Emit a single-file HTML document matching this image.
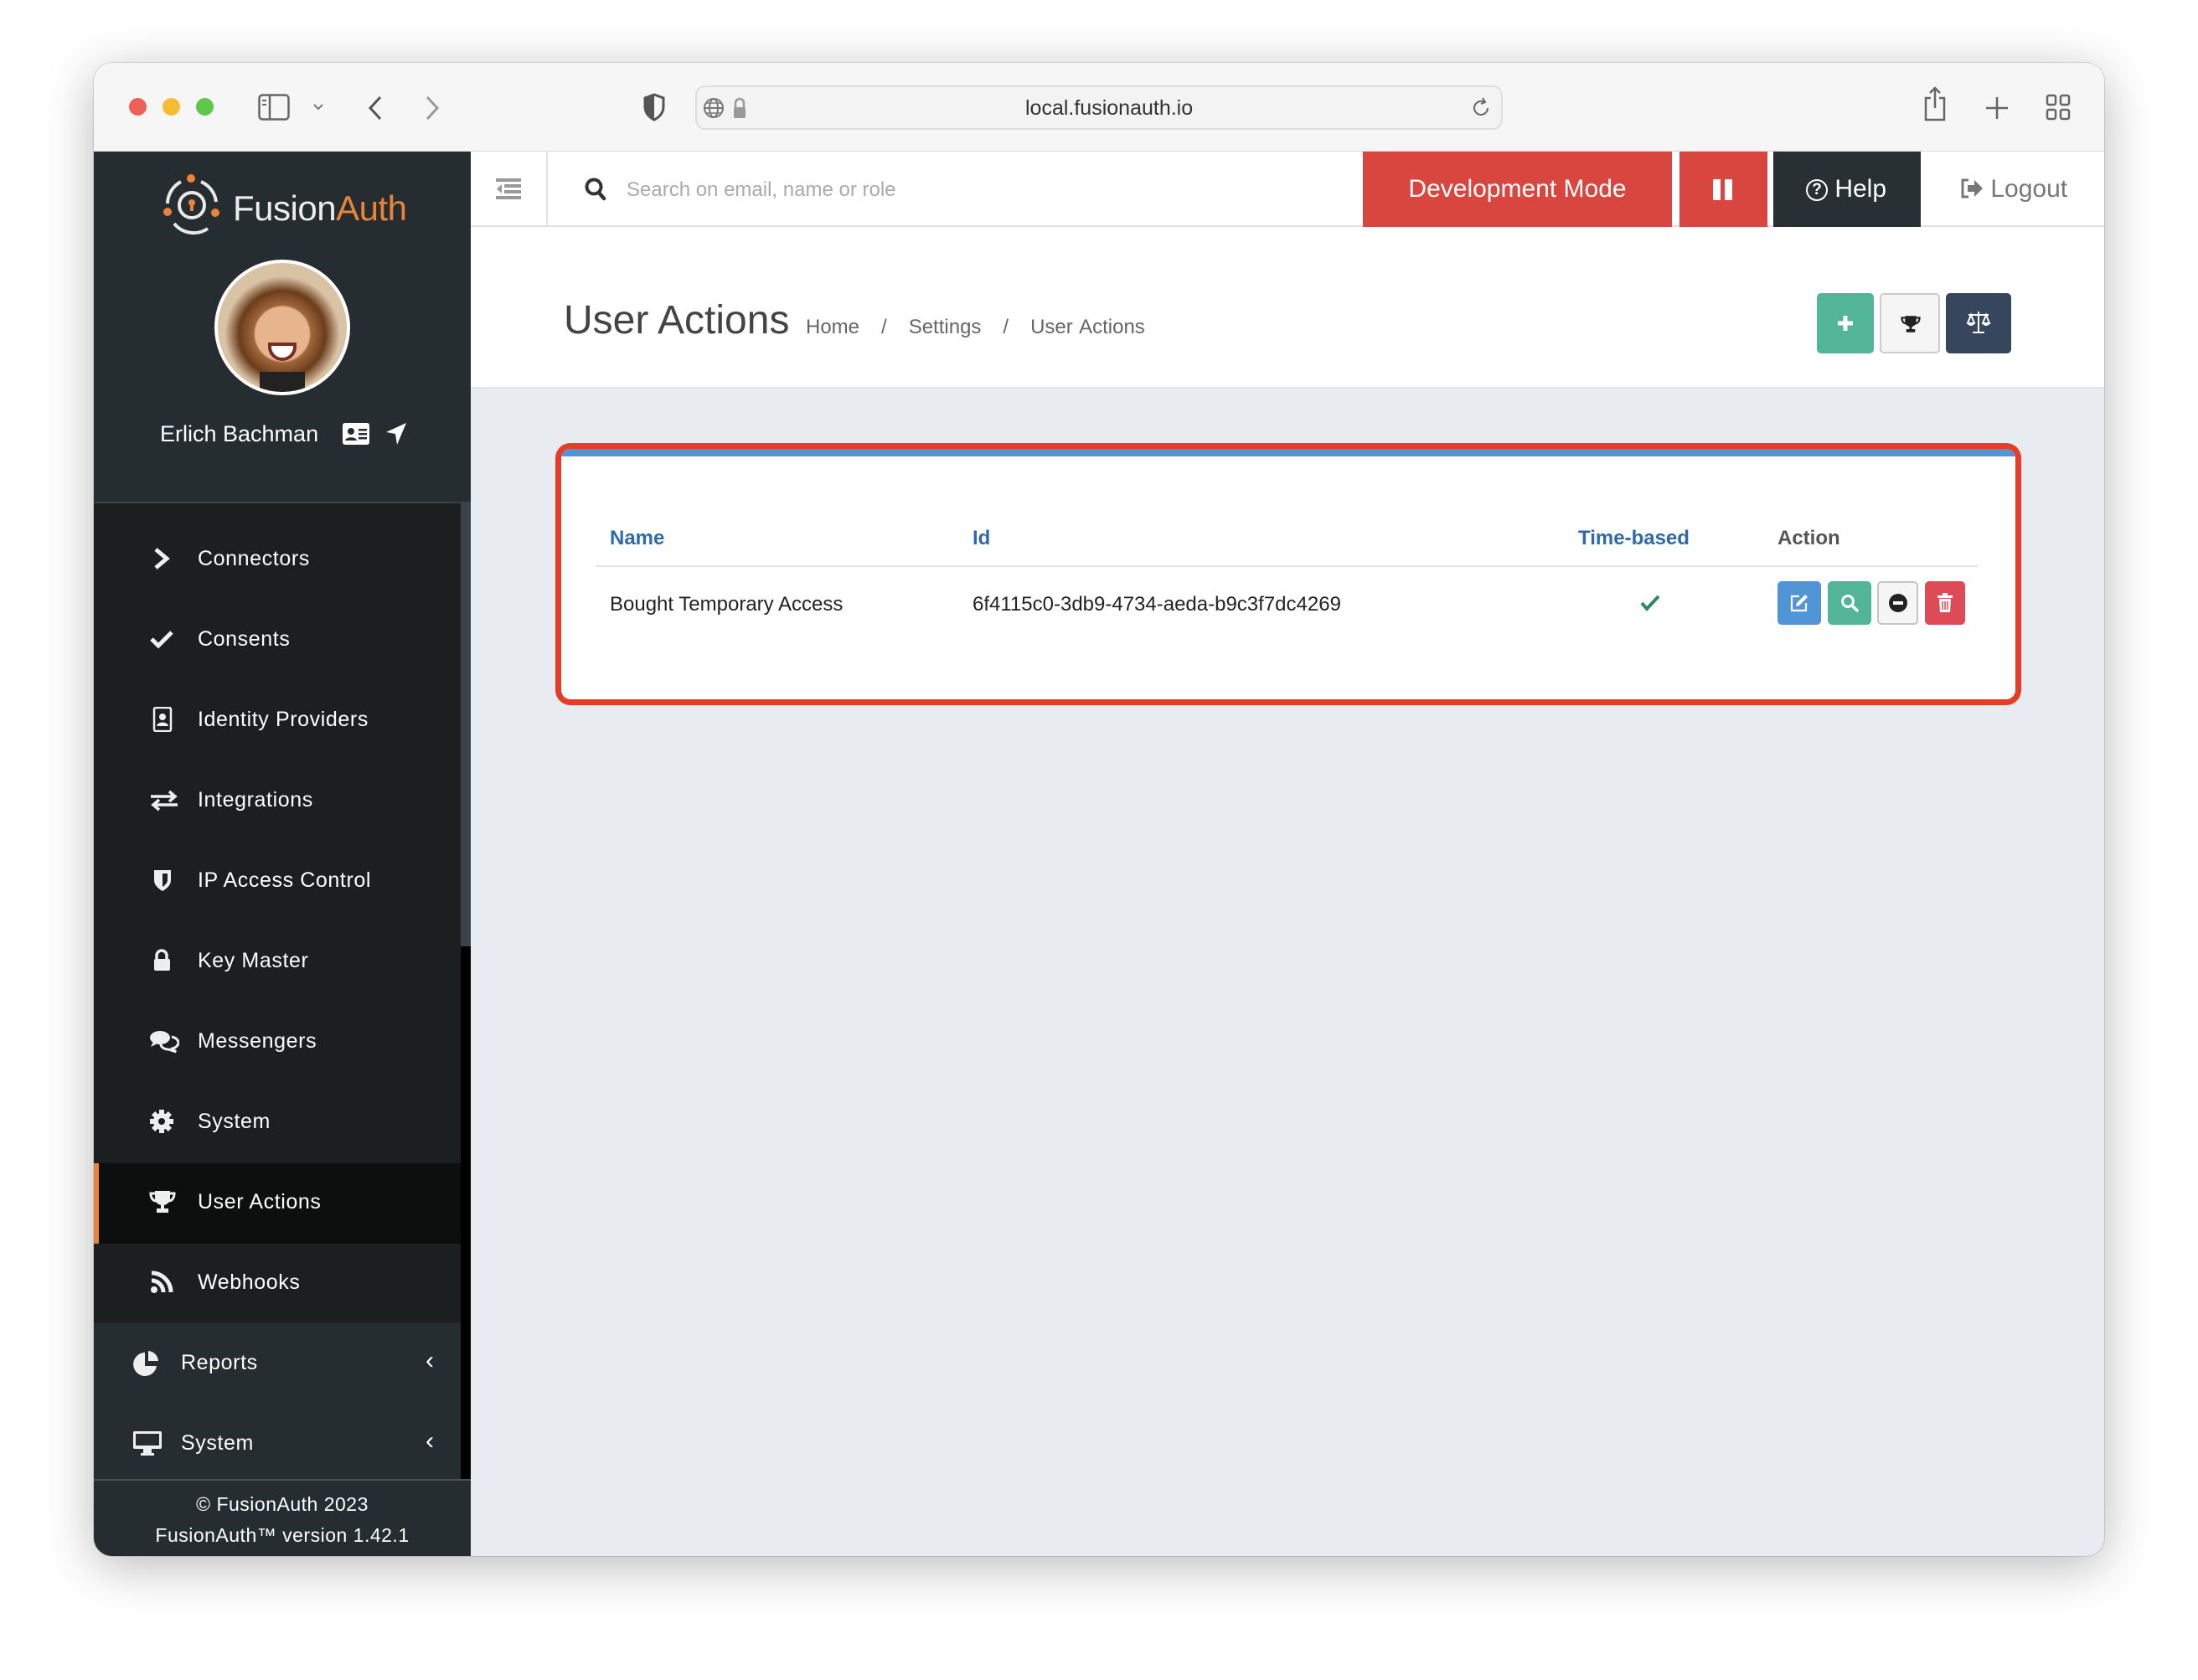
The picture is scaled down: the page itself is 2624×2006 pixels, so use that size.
<!DOCTYPE html>
<html><head><meta charset="utf-8"><style>
*{box-sizing:border-box;margin:0;padding:0}
body{width:2624px;height:2006px;background:#fff;font-family:"Liberation Sans",Arial,sans-serif;position:relative;overflow:hidden}
.abs{position:absolute}
.win{left:112px;top:75px;width:2400px;height:1783px;border-radius:22px;overflow:hidden;box-shadow:0 12px 60px rgba(0,0,0,.28),0 0 0 1px rgba(0,0,0,.12);background:#e8ecf0}
.tb{left:0;top:0;width:2400px;height:106px;background:#f6f6f6;border-bottom:1px solid #dcdcdc}
.dot{width:21px;height:21px;border-radius:50%;top:42px}
.side{left:0;top:106px;width:450px;height:1677px;background:#262d30}
.item{position:absolute;left:0;width:438px;height:96px;color:#fff;font-size:25px;letter-spacing:.6px}
.item span{position:absolute;left:124px;top:33px}
.item svg{position:absolute;left:66px;top:32px}
.nav{left:450px;top:106px;width:1950px;height:90px;background:#fff;border-bottom:2px solid #e2e2e2}
.hdr{left:450px;top:196px;width:1950px;height:193px;background:#fff;border-bottom:2px solid #e0e4e8}
.btn{position:absolute;border-radius:5px}
</style></head><body>
<div class="abs win">
  <div class="abs tb">
    <div class="abs dot" style="left:42px;background:#ed5f57"></div>
    <div class="abs dot" style="left:82px;background:#f5bd33"></div>
    <div class="abs dot" style="left:122px;background:#5fc74a"></div>
    <svg class="abs" style="left:196px;top:37px" width="38" height="32" viewBox="0 0 38 32"><rect x="1.5" y="1.5" width="35" height="29" rx="4" fill="none" stroke="#666" stroke-width="2.5"/><line x1="14" y1="2" x2="14" y2="30" stroke="#666" stroke-width="2.5"/><line x1="5" y1="8" x2="10" y2="8" stroke="#666" stroke-width="2"/><line x1="5" y1="13" x2="10" y2="13" stroke="#666" stroke-width="2"/></svg>
    <svg class="abs" style="left:261px;top:48px" width="14" height="10" viewBox="0 0 14 10"><path d="M2 2l5 5 5-5" fill="none" stroke="#777" stroke-width="2"/></svg>
    <svg class="abs" style="left:326px;top:38px" width="20" height="32" viewBox="0 0 20 32"><path d="M16 3L4 16l12 13" fill="none" stroke="#555" stroke-width="3"/></svg>
    <svg class="abs" style="left:394px;top:38px" width="20" height="32" viewBox="0 0 20 32"><path d="M4 3l12 13L4 29" fill="none" stroke="#999" stroke-width="3"/></svg>
    <svg class="abs" style="left:655px;top:36px" width="28" height="34" viewBox="0 0 28 34"><path d="M14 2L3 6v10c0 8 5 13 11 16 6-3 11-8 11-16V6z" fill="none" stroke="#555" stroke-width="3"/><path d="M14 2v30c-6-3-11-8-11-16V6z" fill="#555"/></svg>
    <div class="abs" style="left:718px;top:27px;width:964px;height:53px;border:2px solid #dedede;border-radius:12px;background:#f3f3f3"></div>
    <svg class="abs" style="left:726px;top:40px" width="28" height="28" viewBox="0 0 28 28"><circle cx="14" cy="14" r="11" fill="none" stroke="#777" stroke-width="2"/><ellipse cx="14" cy="14" rx="5" ry="11" fill="none" stroke="#777" stroke-width="2"/><line x1="3" y1="14" x2="25" y2="14" stroke="#777" stroke-width="2"/><line x1="5" y1="8" x2="23" y2="8" stroke="#777" stroke-width="1.5"/><line x1="5" y1="20" x2="23" y2="20" stroke="#777" stroke-width="1.5"/></svg>
    <svg class="abs" style="left:762px;top:40px" width="18" height="28" viewBox="0 0 18 28"><path d="M4 13V8a5 5 0 0 1 10 0v5" fill="none" stroke="#999" stroke-width="2.5"/><rect x="2" y="13" width="14" height="13" rx="2" fill="#999"/></svg>
    <div class="abs" style="left:1112px;top:40px;font-size:25px;color:#333">local.fusionauth.io</div>
    <svg class="abs" style="left:1643px;top:39px" width="26" height="28" viewBox="0 0 26 28"><path d="M21 15a8 8 0 1 1-4-7" fill="none" stroke="#666" stroke-width="2"/><path d="M15 3l3 5-5 2" fill="none" stroke="#666" stroke-width="2"/></svg>
    <svg class="abs" style="left:2183px;top:28px" width="30" height="42" viewBox="0 0 30 42"><path d="M10 14H4v26h22V14h-6" fill="none" stroke="#666" stroke-width="2.5"/><path d="M15 2v24M9 8l6-6 6 6" fill="none" stroke="#666" stroke-width="2.5"/></svg>
    <svg class="abs" style="left:2258px;top:40px" width="28" height="28" viewBox="0 0 28 28"><path d="M14 1v26M1 14h26" stroke="#666" stroke-width="2.5"/></svg>
    <svg class="abs" style="left:2330px;top:37px" width="30" height="32" viewBox="0 0 30 32"><rect x="2" y="2" width="10" height="11" rx="2" fill="none" stroke="#666" stroke-width="2.5"/><rect x="18" y="2" width="10" height="11" rx="2" fill="none" stroke="#666" stroke-width="2.5"/><rect x="2" y="19" width="10" height="11" rx="2" fill="none" stroke="#666" stroke-width="2.5"/><rect x="18" y="19" width="10" height="11" rx="2" fill="none" stroke="#666" stroke-width="2.5"/></svg>
  </div>

  <div class="abs side">
    <svg class="abs" style="left:82px;top:26px" width="70" height="78" viewBox="0 0 70 78">
      <path d="M22 10A30 30 0 0 0 6 36" fill="none" stroke="#e8e8e8" stroke-width="4"/>
      <path d="M46 10A30 30 0 0 1 64 34" fill="none" stroke="#e8e8e8" stroke-width="4"/>
      <path d="M14 60A30 30 0 0 0 54 66" fill="none" stroke="#e8e8e8" stroke-width="4"/>
      <circle cx="35" cy="38" r="15" fill="none" stroke="#e8e8e8" stroke-width="4"/>
      <circle cx="35" cy="35" r="4" fill="#e8843a"/><rect x="33" y="36" width="4" height="9" fill="#e8843a"/>
      <circle cx="34" cy="6" r="5" fill="#e8843a"/><circle cx="6" cy="46" r="5" fill="#e8843a"/><circle cx="63" cy="47" r="5" fill="#e8843a"/>
    </svg>
    <div class="abs" style="left:166px;top:44px;font-size:42px;color:#ececec;letter-spacing:-.5px">Fusion<span style="color:#e8843a">Auth</span></div>
    <div class="abs" style="left:144px;top:129px;width:162px;height:162px;border-radius:50%;background:#fff;padding:4px">
      <div style="width:154px;height:154px;border-radius:50%;background:radial-gradient(circle at 50% 55%,#e6b58e 0 28%,#a0673a 30%,#6b3d1c 45%,#d9c3a5 60%);position:relative;overflow:hidden">
        <div style="position:absolute;left:60px;top:95px;width:34px;height:22px;border-radius:0 0 17px 17px;background:#fff;border:4px solid #7a2b22"></div>
        <div style="position:absolute;left:50px;top:130px;width:54px;height:30px;background:#222"></div>
      </div>
    </div>
    <div class="abs" style="left:79px;top:322px;font-size:27px;color:#fff">Erlich Bachman</div>
    <svg class="abs" style="left:297px;top:324px" width="32" height="26" viewBox="0 0 32 26"><rect x="0" y="0" width="32" height="26" rx="3" fill="#fff"/><circle cx="10" cy="10" r="4" fill="#262d30"/><path d="M3 21c1-5 13-5 14 0z" fill="#262d30"/><rect x="19" y="7" width="10" height="2.5" fill="#262d30"/><rect x="19" y="12" width="10" height="2.5" fill="#262d30"/><rect x="19" y="17" width="10" height="2.5" fill="#262d30"/></svg>
    <svg class="abs" style="left:348px;top:323px" width="26" height="28" viewBox="0 0 26 28"><path d="M25 1L1 12l11 2 2 13z" fill="#fff"/></svg>
    <div class="abs" style="left:0;top:418px;width:450px;height:2px;background:#3a4447"></div>

    <div class="abs" style="left:0;top:420px;width:438px;height:979px;background:#1b1f20"></div>
    <div class="abs" style="left:0;top:1208px;width:438px;height:96px;background:#0d0f0f"></div>
    <div class="abs" style="left:0;top:1208px;width:6px;height:96px;background:#e8843a"></div>
    <div class="item" style="top:439px"><svg width="30" height="30" viewBox="0 0 30 30"><path d="M8 4l13 11L8 26" fill="none" stroke="#eee" stroke-width="5"/></svg><span>Connectors</span></div>
    <div class="item" style="top:535px"><svg width="30" height="30" viewBox="0 0 30 30"><path d="M3 15l8 8L27 7" fill="none" stroke="#eee" stroke-width="5"/></svg><span>Consents</span></div>
    <div class="item" style="top:631px"><svg width="30" height="30" viewBox="0 0 30 30"><rect x="6" y="1" width="20" height="28" rx="2" fill="none" stroke="#eee" stroke-width="2.5"/><circle cx="16" cy="12" r="4" fill="#eee"/><path d="M9 23c1-6 13-6 14 0z" fill="#eee"/></svg><span>Identity Providers</span></div>
    <div class="item" style="top:727px"><svg width="36" height="30" viewBox="0 0 36 30"><path d="M2 11h28M24 5l7 6-7 6" fill="none" stroke="#eee" stroke-width="3.5"/><path d="M34 21H6M12 15l-7 6 7 6" fill="none" stroke="#eee" stroke-width="3.5"/></svg><span>Integrations</span></div>
    <div class="item" style="top:823px"><svg width="30" height="30" viewBox="0 0 30 30"><path d="M6 3h20v12c0 6-5 10-10 13C11 25 6 21 6 15z" fill="#eee"/><path d="M16 7h6v8c0 3-3 6-6 8z" fill="#1b1f20"/></svg><span>IP Access Control</span></div>
    <div class="item" style="top:919px"><svg width="30" height="30" viewBox="0 0 30 30"><path d="M9 13V9a6 6 0 0 1 12 0v4" fill="none" stroke="#eee" stroke-width="3.5"/><rect x="6" y="13" width="19" height="14" rx="2" fill="#eee"/></svg><span>Key Master</span></div>
    <div class="item" style="top:1015px"><svg width="36" height="30" viewBox="0 0 36 30"><ellipse cx="13" cy="11" rx="12" ry="8" fill="#eee"/><path d="M5 16l-3 6 8-4z" fill="#eee"/><path d="M27 10c5 1 8 4 8 7s-3 6-7 7l4 4-9-3c-5 0-9-3-9-6" fill="none" stroke="#eee" stroke-width="3"/></svg><span>Messengers</span></div>
    <div class="item" style="top:1111px"><svg width="30" height="30" viewBox="0 0 30 30"><g fill="#eee"><circle cx="15" cy="15" r="10"/><rect x="12" y="1" width="6" height="28"/><rect x="1" y="12" width="28" height="6"/><rect x="12" y="1" width="6" height="28" transform="rotate(45 15 15)"/><rect x="12" y="1" width="6" height="28" transform="rotate(-45 15 15)"/></g><circle cx="15" cy="15" r="4" fill="#1b1f20"/></svg><span>System</span></div>
    <div class="item" style="top:1207px"><svg width="32" height="30" viewBox="0 0 32 30"><path d="M7 2h18v8c0 6-4 9-9 9S7 16 7 10z" fill="#eee"/><path d="M7 5H2c0 6 3 9 7 9M25 5h5c0 6-3 9-7 9" fill="none" stroke="#eee" stroke-width="3"/><rect x="14" y="18" width="4" height="6" fill="#eee"/><rect x="9" y="23" width="14" height="5" fill="#eee"/></svg><span>User Actions</span></div>
    <div class="item" style="top:1303px"><svg width="30" height="30" viewBox="0 0 30 30"><circle cx="6" cy="24" r="4" fill="#eee"/><path d="M3 13a14 14 0 0 1 14 14M3 4a23 23 0 0 1 23 23" fill="none" stroke="#eee" stroke-width="5"/></svg><span>Webhooks</span></div>
    <div class="item" style="top:1399px"><svg style="left:46px" width="34" height="32" viewBox="0 0 34 32"><path d="M15 3a14 14 0 1 0 14 16H15z" fill="#eee"/><path d="M19 1a13 13 0 0 1 12 12H19z" fill="#eee"/></svg><span style="left:104px">Reports</span><span style="left:396px;top:28px;font-size:30px">‹</span></div>
    <div class="item" style="top:1495px"><svg style="left:46px" width="36" height="32" viewBox="0 0 36 32"><rect x="1" y="1" width="34" height="21" rx="2" fill="#eee"/><rect x="4" y="4" width="28" height="14" fill="#262d30"/><rect x="13" y="22" width="10" height="6" fill="#eee"/><rect x="10" y="27" width="16" height="3" fill="#eee"/></svg><span style="left:104px">System</span><span style="left:396px;top:28px;font-size:30px">‹</span></div>
    <div class="abs" style="left:438px;top:420px;width:12px;height:1165px;background:#000"></div>
    <div class="abs" style="left:438px;top:420px;width:12px;height:529px;background:#3a4446"></div>
    <div class="abs" style="left:0;top:1585px;width:450px;height:2px;background:#4a5457"></div>
    <div class="abs" style="left:0;top:1597px;width:450px;text-align:center;font-size:23px;color:#fff;line-height:37px;letter-spacing:.5px">© FusionAuth 2023<br>FusionAuth™ version 1.42.1</div>
  </div>

  <div class="abs nav">
    <svg class="abs" style="left:30px;top:32px" width="30" height="26" viewBox="0 0 30 26"><g fill="#999"><rect x="0" y="0" width="30" height="4"/><rect x="10" y="7" width="20" height="4"/><rect x="10" y="14" width="20" height="4"/><rect x="0" y="21" width="30" height="4"/><path d="M7 7v11l-6-5.5z"/></g></svg>
    <div class="abs" style="left:90px;top:0;width:2px;height:90px;background:#e3e3e3"></div>
    <svg class="abs" style="left:135px;top:30px" width="28" height="30" viewBox="0 0 28 30"><circle cx="12" cy="12" r="8.5" fill="none" stroke="#333" stroke-width="4"/><path d="M18 19l6 7" stroke="#333" stroke-width="4.5" stroke-linecap="round"/></svg>
    <div class="abs" style="left:186px;top:32px;font-size:24px;color:#aaa">Search on email, name or role</div>
    <div class="abs" style="left:1065px;top:0;width:369px;height:90px;background:#d9463f;color:#fff;font-size:30px;text-align:center;line-height:90px">Development Mode</div>
    <div class="abs" style="left:1443px;top:0;width:105px;height:90px;background:#d9463f"><div class="abs" style="left:40px;top:33px;width:9px;height:25px;background:#fff"></div><div class="abs" style="left:54px;top:33px;width:9px;height:25px;background:#fff"></div></div>
    <div class="abs" style="left:1555px;top:0;width:176px;height:90px;background:#283033;color:#fff;font-size:30px;line-height:90px;padding-left:39px"><span style="display:inline-block;width:26px;height:26px;border:2.5px solid #fff;border-radius:50%;font-size:19px;line-height:21px;text-align:center;vertical-align:3px;font-weight:bold">?</span> Help</div>
    <div class="abs" style="left:1778px;top:0;height:90px;line-height:90px;font-size:30px;color:#777"><svg width="28" height="26" viewBox="0 0 28 26" style="vertical-align:-3px"><path d="M10 3H3v20h7" fill="none" stroke="#777" stroke-width="3"/><path d="M9 9h8V3l10 10-10 10v-6H9z" fill="#777"/></svg> Logout</div>
  </div>

  <div class="abs hdr">
    <div class="abs" style="left:111px;top:84px;font-size:48px;color:#444">User Actions</div>
    <div class="abs" style="left:400px;top:106px;font-size:24px;color:#666;word-spacing:2px">Home &nbsp;&nbsp;/&nbsp;&nbsp; Settings &nbsp;&nbsp;/&nbsp;&nbsp; User Actions</div>
    <div class="btn" style="left:1607px;top:79px;width:68px;height:72px;background:#52b596"><svg class="abs" style="left:24px;top:26px" width="20" height="20" viewBox="0 0 20 20"><path d="M10 1v18M1 10h18" stroke="#fff" stroke-width="5"/></svg></div>
    <div class="btn" style="left:1682px;top:79px;width:72px;height:72px;background:#f5f5f5;border:2px solid #ccc"><svg class="abs" style="left:23px;top:23px" width="24" height="24" viewBox="0 0 32 30"><path d="M7 2h18v8c0 6-4 9-9 9S7 16 7 10z" fill="#222"/><path d="M7 5H2c0 6 3 9 7 9M25 5h5c0 6-3 9-7 9" fill="none" stroke="#222" stroke-width="3"/><rect x="14" y="18" width="4" height="6" fill="#222"/><rect x="9" y="23" width="14" height="5" fill="#222"/></svg></div>
    <div class="btn" style="left:1761px;top:79px;width:78px;height:72px;background:#36465c"><svg class="abs" style="left:24px;top:20px" width="30" height="30" viewBox="0 0 30 30"><path d="M15 2v24M8 27h14M3 6h24M6 6l-4 10h8zM24 6l-4 10h8z" fill="none" stroke="#fff" stroke-width="2"/><path d="M2 16a4 3 0 0 0 8 0zM20 16a4 3 0 0 0 8 0z" fill="#fff"/></svg></div>
  </div>

  <div class="abs" style="left:551px;top:454px;width:1750px;height:313px;border:7px solid #e53d27;border-radius:18px;background:#fff;overflow:hidden">
    <div class="abs" style="left:0;top:0;width:1736px;height:9px;background:#5294d6"></div>
    <div class="abs" style="left:58px;top:93px;font-size:24px;font-weight:bold;color:#2c6aac">Name</div>
    <div class="abs" style="left:491px;top:93px;font-size:24px;font-weight:bold;color:#2c6aac">Id</div>
    <div class="abs" style="left:1214px;top:93px;font-size:24px;font-weight:bold;color:#2c6aac">Time-based</div>
    <div class="abs" style="left:1452px;top:93px;font-size:24px;font-weight:bold;color:#555">Action</div>
    <div class="abs" style="left:41px;top:139px;width:1650px;height:2px;background:#e4e4e4"></div>
    <div class="abs" style="left:58px;top:172px;font-size:24px;color:#222">Bought Temporary Access</div>
    <div class="abs" style="left:491px;top:172px;font-size:24px;color:#222">6f4115c0-3db9-4734-aeda-b9c3f7dc4269</div>
    <svg class="abs" style="left:1288px;top:173px" width="24" height="22" viewBox="0 0 24 22"><path d="M2 11l6 7L22 3" fill="none" stroke="#2e8a5e" stroke-width="4"/></svg>
    <div class="btn" style="left:1452px;top:158px;width:52px;height:52px;background:#5195d7"><svg class="abs" style="left:14px;top:14px" width="24" height="24" viewBox="0 0 24 24"><path d="M12 4H3v17h17v-9" fill="none" stroke="#fff" stroke-width="2.2"/><path d="M19 2l3 3-10 10-4 1 1-4z" fill="#fff"/></svg></div>
    <div class="btn" style="left:1512px;top:158px;width:52px;height:52px;background:#52b596"><svg class="abs" style="left:14px;top:14px" width="24" height="24" viewBox="0 0 24 24"><circle cx="10" cy="10" r="6.5" fill="none" stroke="#fff" stroke-width="3"/><path d="M15 15l6 6" stroke="#fff" stroke-width="3.5" stroke-linecap="round"/></svg></div>
    <div class="btn" style="left:1571px;top:158px;width:49px;height:52px;background:#f5f5f5;border:2px solid #c4c4c4"><svg class="abs" style="left:11px;top:12px" width="24" height="24" viewBox="0 0 24 24"><circle cx="12" cy="12" r="11" fill="#222"/><rect x="6" y="10" width="12" height="4" fill="#fff"/></svg></div>
    <div class="btn" style="left:1628px;top:158px;width:48px;height:52px;background:#dd4b57"><svg class="abs" style="left:14px;top:13px" width="20" height="26" viewBox="0 0 20 26"><rect x="1" y="4" width="18" height="3" fill="#fff"/><rect x="7" y="1" width="6" height="3" fill="#fff"/><path d="M3 8h14l-1 16H4z" fill="#fff"/><path d="M7 11v10M10 11v10M13 11v10" stroke="#dd4b57" stroke-width="1.5"/></svg></div>
  </div>
</div>
</body></html>
